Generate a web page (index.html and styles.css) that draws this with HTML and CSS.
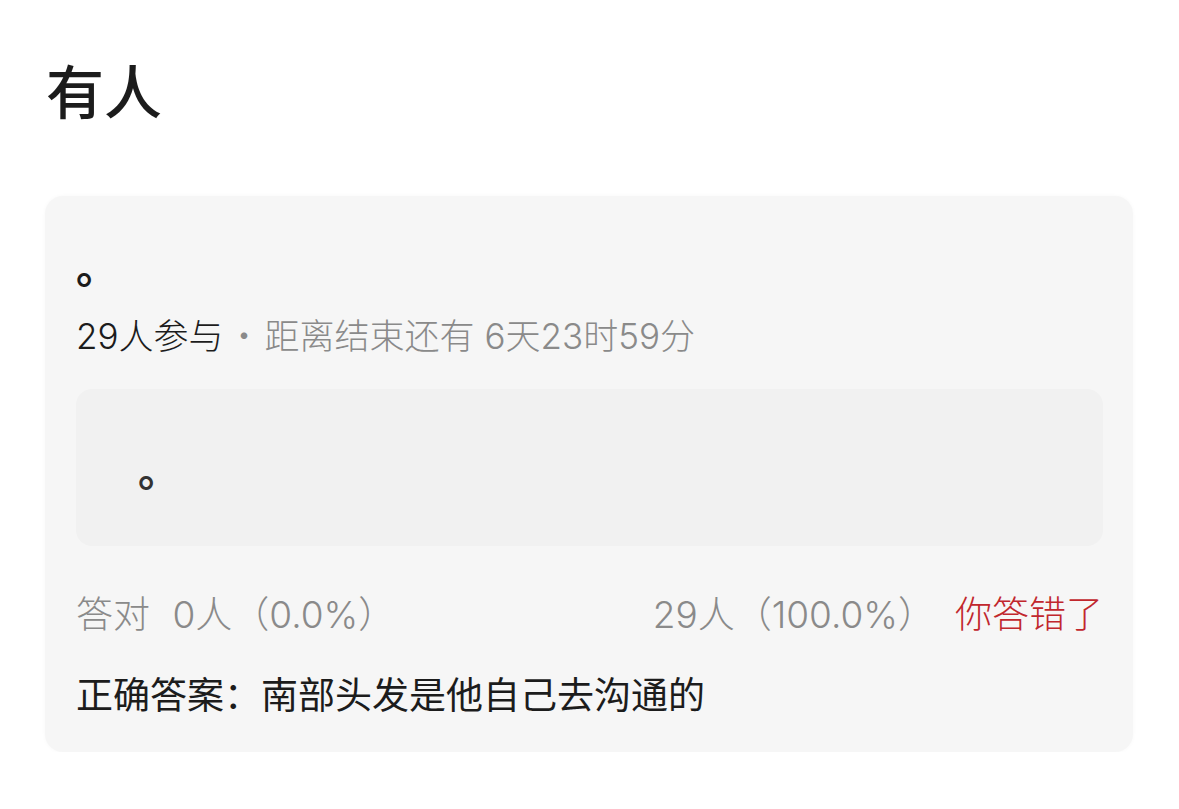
FILE: index.html
```html
<!DOCTYPE html>
<html lang="zh-CN">
<head>
  <meta charset="UTF-8">
  <title>有人</title>
  <link rel="stylesheet" href="styles.css">
</head>
<body>

<h1 class="page-title">有人</h1>

<div class="quiz">
  <div class="question">。</div>
  <div class="meta"><span class="count">29人参与</span><span class="dot">·</span><span>距离结束还有 6天23时59分</span></div>

  <div class="option">。</div>

  <div class="stats">
    <div class="stat-left">
      <span class="label">答对</span>
      <span>0人（0.0%）</span>
    </div>
    <div class="stat-right">
      <span>29人（100.0%）</span><span class="wrong">你答错了</span>
    </div>
  </div>

  <div class="answer">正确答案：南部头发是他自己去沟通的</div>
</div>

</body>
</html>
```

FILE: styles.css
```css
body {
  margin: 0;
  background: #ffffff;
  font-family: "Inter", "Noto Sans CJK SC", "Noto Sans", sans-serif;
  color: #1c1c1c;
}
.page-title {
  margin: 0;
  padding: 51px 0 0 46px;
  font-family: "Noto Sans CJK SC", sans-serif;
  font-size: 58px;
  font-weight: 500;
  line-height: 76px;
  height: 140px;
  box-sizing: border-box;
}
.quiz {
  margin: 56px 46px 0 45px;
  background: #f6f6f6;
  border-radius: 18px;
  padding: 42px 30px 31px 31px;
  box-shadow: 0 0 4px rgba(0,0,0,0.03);
}
.question {
  font-family: "Noto Sans CJK SC", sans-serif;
  font-size: 42px;
  font-weight: 700;
  line-height: 54px;
  color: #1c1c1c;
}
.meta {
  margin-top: 20px;
  font-size: 35px;
  font-weight: 300;
  line-height: 44px;
  color: #8a8a8a;
}
.meta .count {
  color: #1c1c1c;
}
.meta .dot {
  font-family: "Noto Sans CJK SC", sans-serif;
  margin: 0 3px;
}
.option {
  margin-top: 31px;
  height: 157px;
  background: #f1f1f1;
  border-radius: 16px;
  display: flex;
  align-items: center;
  padding-left: 62px;
  font-family: "Noto Sans CJK SC", sans-serif;
  font-size: 42px;
  font-weight: 700;
  color: #333;
}
.stats {
  margin-top: 45px;
  display: flex;
  justify-content: space-between;
  font-size: 37px;
  font-weight: 300;
  line-height: 48px;
  color: #8a8a8a;
}
.stat-left .label {
  margin-right: 12px;
}
.stat-right .wrong {
  margin-left: 20px;
  color: #c1272d;
}
.answer {
  margin-top: 32px;
  font-size: 37px;
  line-height: 50px;
  color: #1c1c1c;
}
```
